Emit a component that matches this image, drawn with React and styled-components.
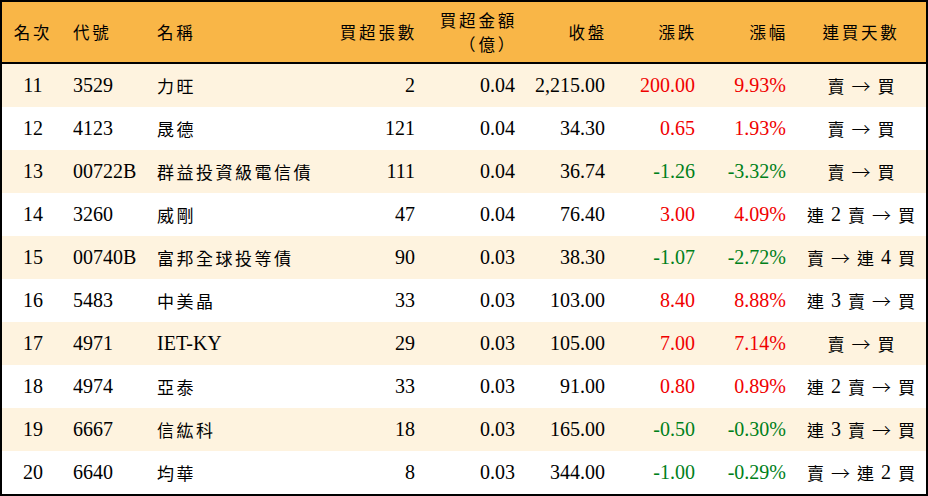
import React from "react";
import styled, { createGlobalStyle } from "styled-components";

const Global = createGlobalStyle`
  html, body { margin: 0; padding: 0; background: #fff; }
  body { font-family: "Liberation Serif", "Noto Sans CJK TC", serif; color: #000; }
`;

const COLS = "62px 84px 192px 85px 100px 90px 90px 91px 130px";

const Table = styled.div`
  width: 928px;
  height: 496px;
  box-sizing: border-box;
  border: 2px solid #000;
  display: flex;
  flex-direction: column;
  background: #fff;
`;

const HeadRow = styled.div`
  display: grid;
  grid-template-columns: ${COLS};
  height: 62px;
  box-sizing: border-box;
  background: #f9b647;
  border-bottom: 2px solid #000;
`;

const Row = styled.div`
  display: grid;
  grid-template-columns: ${COLS};
  height: 43px;
  background: ${(p) => (p.$odd ? "#fef3df" : "#ffffff")};
`;

const Cell = styled.div`
  display: flex;
  align-items: center;
  box-sizing: border-box;
  font-size: 20px;
  white-space: nowrap;
  justify-content: ${(p) =>
    p.$align === "right" ? "flex-end" : p.$align === "center" ? "center" : "flex-start"};
  padding-left: ${(p) => (p.$align === "left" ? "9px" : "0")};
  padding-right: ${(p) => (p.$align === "right" ? "10px" : "0")};
  color: ${(p) => p.$color || "#000"};
`;

const HeadCell = styled(Cell)`
  padding-right: ${(p) => (p.$align === "right" ? "8px" : "0")};
`;

const HeadText = styled.span`
  font-family: "Noto Sans CJK TC", serif;
  font-size: 16.5px;
  letter-spacing: 2.8px;
  line-height: 24px;
  display: block;
  text-align: ${(p) => p.$align};
`;

const Cjk = styled.span`
  font-family: "Noto Sans CJK TC", serif;
  font-size: 17px;
  letter-spacing: 2.5px;
`;

const Streak = styled.span`
  display: flex;
  align-items: center;
  gap: 7px;
`;

const StreakCjk = styled.span`
  font-family: "Noto Sans CJK TC", serif;
  font-size: 17px;
`;

const Arrow = styled.span`
  font-family: "Noto Sans CJK TC", serif;
  font-size: 19px;
  font-weight: 300;
`;

const isCjk = (ch) => /[\u3000-\u9fff\uff00-\uffef]/.test(ch);

function Mixed({ text }) {
  const parts = [];
  let buf = "";
  let cur = null;
  for (const ch of text) {
    const c = isCjk(ch);
    if (cur === null || c === cur) {
      buf += ch;
    } else {
      parts.push([cur, buf]);
      buf = ch;
    }
    cur = c;
  }
  if (buf) parts.push([cur, buf]);
  return parts.map(([c, s], i) => (c ? <Cjk key={i}>{s}</Cjk> : <span key={i}>{s}</span>));
}

function StreakText({ text }) {
  return (
    <Streak>
      {text.split(" ").map((t, i) =>
        t === "→" ? (
          <Arrow key={i}>→</Arrow>
        ) : isCjk(t) ? (
          <StreakCjk key={i}>{t}</StreakCjk>
        ) : (
          <span key={i}>{t}</span>
        )
      )}
    </Streak>
  );
}

const RED = "#f00000";
const GREEN = "#00801a";

const headers = [
  { t: ["名次"], a: "center" },
  { t: ["代號"], a: "left" },
  { t: ["名稱"], a: "left" },
  { t: ["買超張數"], a: "right" },
  { t: ["買超金額", "（億）"], a: "right" },
  { t: ["收盤"], a: "right" },
  { t: ["漲跌"], a: "right" },
  { t: ["漲幅"], a: "right" },
  { t: ["連買天數"], a: "center" },
];

const rows = [
  ["11", "3529", "力旺", "2", "0.04", "2,215.00", "200.00", "9.93%", "賣 → 買"],
  ["12", "4123", "晟德", "121", "0.04", "34.30", "0.65", "1.93%", "賣 → 買"],
  ["13", "00722B", "群益投資級電信債", "111", "0.04", "36.74", "-1.26", "-3.32%", "賣 → 買"],
  ["14", "3260", "威剛", "47", "0.04", "76.40", "3.00", "4.09%", "連 2 賣 → 買"],
  ["15", "00740B", "富邦全球投等債", "90", "0.03", "38.30", "-1.07", "-2.72%", "賣 → 連 4 買"],
  ["16", "5483", "中美晶", "33", "0.03", "103.00", "8.40", "8.88%", "連 3 賣 → 買"],
  ["17", "4971", "IET-KY", "29", "0.03", "105.00", "7.00", "7.14%", "賣 → 買"],
  ["18", "4974", "亞泰", "33", "0.03", "91.00", "0.80", "0.89%", "連 2 賣 → 買"],
  ["19", "6667", "信紘科", "18", "0.03", "165.00", "-0.50", "-0.30%", "連 3 賣 → 買"],
  ["20", "6640", "均華", "8", "0.03", "344.00", "-1.00", "-0.29%", "賣 → 連 2 買"],
];

export default function App() {
  return (
    <>
      <Global />
      <Table>
        <HeadRow>
          {headers.map((h, i) => (
            <HeadCell key={i} $align={h.a}>
              <HeadText $align={h.a}>
                {h.t.map((line, j) => (
                  <React.Fragment key={j}>
                    {j > 0 && <br />}
                    {line}
                  </React.Fragment>
                ))}
              </HeadText>
            </HeadCell>
          ))}
        </HeadRow>
        {rows.map((r, i) => {
          const color = r[6].startsWith("-") ? GREEN : RED;
          return (
            <Row key={r[0]} $odd={i % 2 === 0}>
              <Cell $align="center">{r[0]}</Cell>
              <Cell $align="left">{r[1]}</Cell>
              <Cell $align="left">
                <Mixed text={r[2]} />
              </Cell>
              <Cell $align="right">{r[3]}</Cell>
              <Cell $align="right">{r[4]}</Cell>
              <Cell $align="right">{r[5]}</Cell>
              <Cell $align="right" $color={color}>{r[6]}</Cell>
              <Cell $align="right" $color={color}>{r[7]}</Cell>
              <Cell $align="center">
                <StreakText text={r[8]} />
              </Cell>
            </Row>
          );
        })}
      </Table>
    </>
  );
}
